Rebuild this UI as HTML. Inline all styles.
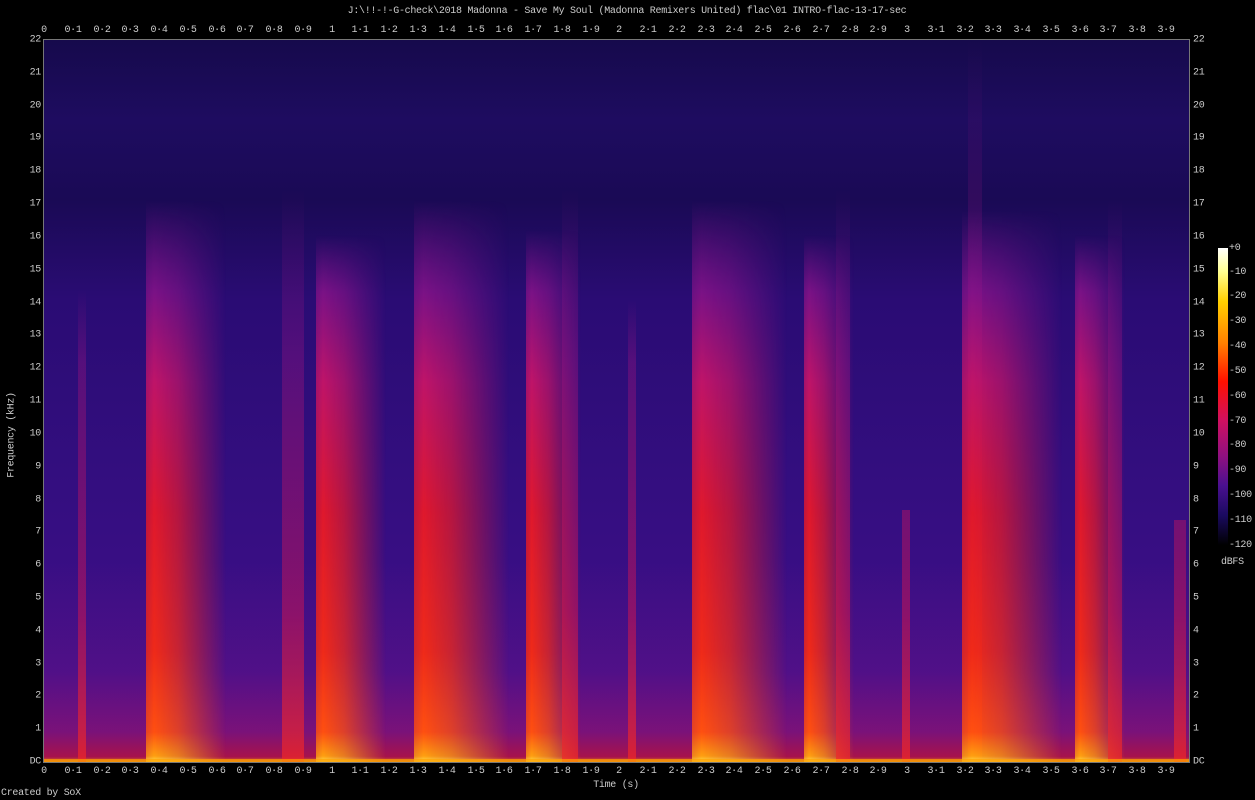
<!DOCTYPE html>
<html><head><meta charset="utf-8"><style>
body{margin:0;width:1255px;height:800px;background:#000;position:relative;overflow:hidden;font-family:"Liberation Mono",monospace;font-size:10px;color:#ccc;letter-spacing:-0.3px}
.t{position:absolute;white-space:nowrap}
.tx{transform:translateX(-50%)}
.ty{transform:translateY(-50%)}
#plot{position:absolute;left:44px;top:40px;width:1145px;height:722px;overflow:hidden;
background:
linear-gradient(to top,rgba(255,150,0,.8) 0,rgba(230,20,30,.6) 5px,rgba(200,20,90,.4) 30px,rgba(150,20,130,.2) 90px,transparent 200px),
linear-gradient(to bottom,#160a4c 0,#1e0c60 80px,#1a0a55 160px,#2a0c74 260px,#340e80 450px,#3e0f88 620px,#4a1090 722px);
box-shadow:0 0 0 1px #777}
.b{position:absolute;bottom:0;
background:linear-gradient(to top,#ffe050 0,#ffa010 6px,#ff5010 30px,#f02a18 110px,#e0182c 250px,#c01468 380px,rgba(150,20,140,.75) 470px,rgba(100,20,150,0) 100%);
-webkit-mask-image:linear-gradient(to right,rgba(0,0,0,.8) 0,#000 10%,rgba(0,0,0,.75) 40%,rgba(0,0,0,.3) 75%,transparent 100%);
mask-image:linear-gradient(to right,rgba(0,0,0,.8) 0,#000 10%,rgba(0,0,0,.75) 40%,rgba(0,0,0,.3) 75%,transparent 100%)}
.w{position:absolute;bottom:0;background:linear-gradient(to top,rgba(240,40,40,.7) 0,rgba(210,20,80,.5) 150px,rgba(160,20,130,.35) 400px,rgba(120,20,150,0) 100%)}
#cb{position:absolute;left:1218px;top:248px;width:10px;height:297px;background:linear-gradient(to bottom,#fff 0,#ffff90 8%,#ffd000 18%,#ff8000 32%,#ff1000 45%,#d01060 58%,#901080 70%,#4a1090 80%,#1a0a60 90%,#000 100%)}
</style></head><body>
<div class="t tx" style="left:627px;top:6px">J:\!!-!-G-check\2018 Madonna - Save My Soul (Madonna Remixers United) flac\01 INTRO-flac-13-17-sec</div>
<div id="plot">
<div class="w" style="left:34px;width:8px;top:250px"></div>
<div class="b" style="left:102px;width:80px;top:160px"></div>
<div class="w" style="left:238px;width:22px;top:150px"></div>
<div class="b" style="left:272px;width:70px;top:195px"></div>
<div class="b" style="left:370px;width:95px;top:160px"></div>
<div class="b" style="left:482px;width:55px;top:190px"></div>
<div class="w" style="left:518px;width:16px;top:150px"></div>
<div class="w" style="left:584px;width:8px;top:260px"></div>
<div class="b" style="left:648px;width:95px;top:160px"></div>
<div class="b" style="left:760px;width:50px;top:195px"></div>
<div class="w" style="left:792px;width:14px;top:150px"></div>
<div class="w" style="left:858px;width:8px;top:470px"></div>
<div class="w" style="left:924px;width:14px;top:0px"></div>
<div class="b" style="left:918px;width:100px;top:170px"></div>
<div class="b" style="left:1031px;width:50px;top:195px"></div>
<div class="w" style="left:1064px;width:14px;top:160px"></div>
<div class="w" style="left:1130px;width:12px;top:480px"></div>
<div style="position:absolute;left:0;width:1145px;bottom:0;height:3px;background:#ffa000;opacity:.7"></div>
</div>
<div id="cb"></div>
<div class="t" style="left:1229px;top:243px">+0</div>
<div class="t" style="left:1229px;top:267px">-10</div>
<div class="t" style="left:1229px;top:291px">-20</div>
<div class="t" style="left:1229px;top:316px">-30</div>
<div class="t" style="left:1229px;top:341px">-40</div>
<div class="t" style="left:1229px;top:366px">-50</div>
<div class="t" style="left:1229px;top:391px">-60</div>
<div class="t" style="left:1229px;top:416px">-70</div>
<div class="t" style="left:1229px;top:440px">-80</div>
<div class="t" style="left:1229px;top:465px">-90</div>
<div class="t" style="left:1229px;top:490px">-100</div>
<div class="t" style="left:1229px;top:515px">-110</div>
<div class="t" style="left:1229px;top:540px">-120</div>
<div class="t" style="left:1221px;top:557px">dBFS</div>
<div class="t" style="top:435px;transform:translate(-50%,-50%) rotate(-90deg);left:12px">Frequency (kHz)</div>
<div class="t tx" style="left:616px;top:780px">Time (s)</div>
<div class="t" style="left:1px;top:788px">Created by SoX</div>
<div class="t tx" style="left:44px;top:25px">0</div><div class="t tx" style="left:73px;top:25px">0·1</div><div class="t tx" style="left:102px;top:25px">0·2</div><div class="t tx" style="left:130px;top:25px">0·3</div><div class="t tx" style="left:159px;top:25px">0·4</div><div class="t tx" style="left:188px;top:25px">0·5</div><div class="t tx" style="left:217px;top:25px">0·6</div><div class="t tx" style="left:245px;top:25px">0·7</div><div class="t tx" style="left:274px;top:25px">0·8</div><div class="t tx" style="left:303px;top:25px">0·9</div><div class="t tx" style="left:332px;top:25px">1</div><div class="t tx" style="left:360px;top:25px">1·1</div><div class="t tx" style="left:389px;top:25px">1·2</div><div class="t tx" style="left:418px;top:25px">1·3</div><div class="t tx" style="left:447px;top:25px">1·4</div><div class="t tx" style="left:476px;top:25px">1·5</div><div class="t tx" style="left:504px;top:25px">1·6</div><div class="t tx" style="left:533px;top:25px">1·7</div><div class="t tx" style="left:562px;top:25px">1·8</div><div class="t tx" style="left:591px;top:25px">1·9</div><div class="t tx" style="left:619px;top:25px">2</div><div class="t tx" style="left:648px;top:25px">2·1</div><div class="t tx" style="left:677px;top:25px">2·2</div><div class="t tx" style="left:706px;top:25px">2·3</div><div class="t tx" style="left:734px;top:25px">2·4</div><div class="t tx" style="left:763px;top:25px">2·5</div><div class="t tx" style="left:792px;top:25px">2·6</div><div class="t tx" style="left:821px;top:25px">2·7</div><div class="t tx" style="left:850px;top:25px">2·8</div><div class="t tx" style="left:878px;top:25px">2·9</div><div class="t tx" style="left:907px;top:25px">3</div><div class="t tx" style="left:936px;top:25px">3·1</div><div class="t tx" style="left:965px;top:25px">3·2</div><div class="t tx" style="left:993px;top:25px">3·3</div><div class="t tx" style="left:1022px;top:25px">3·4</div><div class="t tx" style="left:1051px;top:25px">3·5</div><div class="t tx" style="left:1080px;top:25px">3·6</div><div class="t tx" style="left:1108px;top:25px">3·7</div><div class="t tx" style="left:1137px;top:25px">3·8</div><div class="t tx" style="left:1166px;top:25px">3·9</div>
<div class="t tx" style="left:44px;top:766px">0</div><div class="t tx" style="left:73px;top:766px">0·1</div><div class="t tx" style="left:102px;top:766px">0·2</div><div class="t tx" style="left:130px;top:766px">0·3</div><div class="t tx" style="left:159px;top:766px">0·4</div><div class="t tx" style="left:188px;top:766px">0·5</div><div class="t tx" style="left:217px;top:766px">0·6</div><div class="t tx" style="left:245px;top:766px">0·7</div><div class="t tx" style="left:274px;top:766px">0·8</div><div class="t tx" style="left:303px;top:766px">0·9</div><div class="t tx" style="left:332px;top:766px">1</div><div class="t tx" style="left:360px;top:766px">1·1</div><div class="t tx" style="left:389px;top:766px">1·2</div><div class="t tx" style="left:418px;top:766px">1·3</div><div class="t tx" style="left:447px;top:766px">1·4</div><div class="t tx" style="left:476px;top:766px">1·5</div><div class="t tx" style="left:504px;top:766px">1·6</div><div class="t tx" style="left:533px;top:766px">1·7</div><div class="t tx" style="left:562px;top:766px">1·8</div><div class="t tx" style="left:591px;top:766px">1·9</div><div class="t tx" style="left:619px;top:766px">2</div><div class="t tx" style="left:648px;top:766px">2·1</div><div class="t tx" style="left:677px;top:766px">2·2</div><div class="t tx" style="left:706px;top:766px">2·3</div><div class="t tx" style="left:734px;top:766px">2·4</div><div class="t tx" style="left:763px;top:766px">2·5</div><div class="t tx" style="left:792px;top:766px">2·6</div><div class="t tx" style="left:821px;top:766px">2·7</div><div class="t tx" style="left:850px;top:766px">2·8</div><div class="t tx" style="left:878px;top:766px">2·9</div><div class="t tx" style="left:907px;top:766px">3</div><div class="t tx" style="left:936px;top:766px">3·1</div><div class="t tx" style="left:965px;top:766px">3·2</div><div class="t tx" style="left:993px;top:766px">3·3</div><div class="t tx" style="left:1022px;top:766px">3·4</div><div class="t tx" style="left:1051px;top:766px">3·5</div><div class="t tx" style="left:1080px;top:766px">3·6</div><div class="t tx" style="left:1108px;top:766px">3·7</div><div class="t tx" style="left:1137px;top:766px">3·8</div><div class="t tx" style="left:1166px;top:766px">3·9</div>
<div style="position:absolute;right:1214px;top:0;text-align:right">
<div class="t ty" style="right:0;top:40px">22</div><div class="t ty" style="right:0;top:73px">21</div><div class="t ty" style="right:0;top:106px">20</div><div class="t ty" style="right:0;top:138px">19</div><div class="t ty" style="right:0;top:171px">18</div><div class="t ty" style="right:0;top:204px">17</div><div class="t ty" style="right:0;top:237px">16</div><div class="t ty" style="right:0;top:270px">15</div><div class="t ty" style="right:0;top:303px">14</div><div class="t ty" style="right:0;top:335px">13</div><div class="t ty" style="right:0;top:368px">12</div><div class="t ty" style="right:0;top:401px">11</div><div class="t ty" style="right:0;top:434px">10</div><div class="t ty" style="right:0;top:467px">9</div><div class="t ty" style="right:0;top:500px">8</div><div class="t ty" style="right:0;top:532px">7</div><div class="t ty" style="right:0;top:565px">6</div><div class="t ty" style="right:0;top:598px">5</div><div class="t ty" style="right:0;top:631px">4</div><div class="t ty" style="right:0;top:664px">3</div><div class="t ty" style="right:0;top:696px">2</div><div class="t ty" style="right:0;top:729px">1</div><div class="t ty" style="right:0;top:762px">DC</div>
</div>
<div class="t ty" style="left:1193px;top:40px">22</div><div class="t ty" style="left:1193px;top:73px">21</div><div class="t ty" style="left:1193px;top:106px">20</div><div class="t ty" style="left:1193px;top:138px">19</div><div class="t ty" style="left:1193px;top:171px">18</div><div class="t ty" style="left:1193px;top:204px">17</div><div class="t ty" style="left:1193px;top:237px">16</div><div class="t ty" style="left:1193px;top:270px">15</div><div class="t ty" style="left:1193px;top:303px">14</div><div class="t ty" style="left:1193px;top:335px">13</div><div class="t ty" style="left:1193px;top:368px">12</div><div class="t ty" style="left:1193px;top:401px">11</div><div class="t ty" style="left:1193px;top:434px">10</div><div class="t ty" style="left:1193px;top:467px">9</div><div class="t ty" style="left:1193px;top:500px">8</div><div class="t ty" style="left:1193px;top:532px">7</div><div class="t ty" style="left:1193px;top:565px">6</div><div class="t ty" style="left:1193px;top:598px">5</div><div class="t ty" style="left:1193px;top:631px">4</div><div class="t ty" style="left:1193px;top:664px">3</div><div class="t ty" style="left:1193px;top:696px">2</div><div class="t ty" style="left:1193px;top:729px">1</div><div class="t ty" style="left:1193px;top:762px">DC</div>
</body></html>
